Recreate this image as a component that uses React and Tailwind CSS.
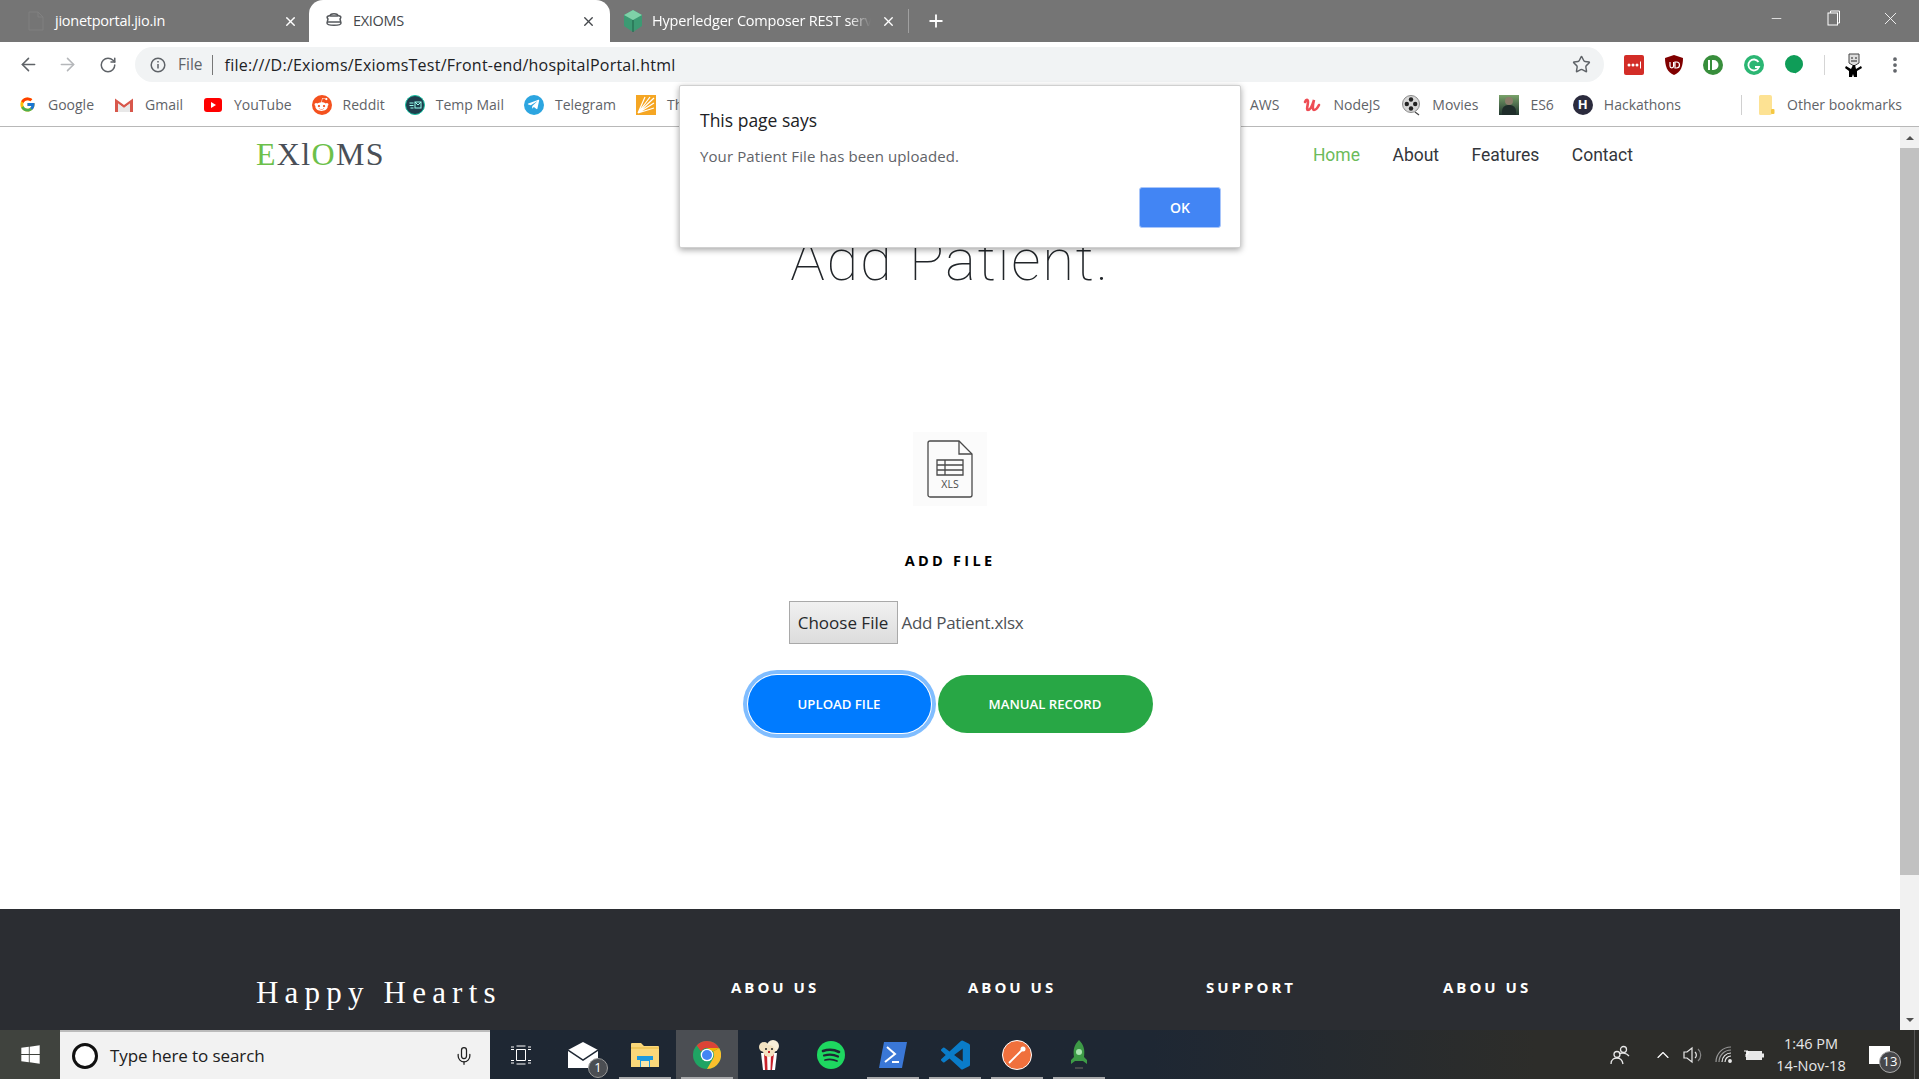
import React from "react";
import { ArrowLeft, ArrowRight, RotateCw, Star, EllipsisVertical, Plus, X, Minus, ChevronUp, Mic } from "lucide-react";
import { FcGoogle } from "react-icons/fc";
import { FaRedditAlien, FaTelegramPlane, FaWindows } from "react-icons/fa";

const ui = "font-['Open_Sans','Noto_Sans',sans-serif]";

function Gmail() {
  return (
    <svg width="18" height="15" viewBox="0 0 18 15">
      <path d="M0 1.500 9 8l9-6.500V15h-3V6.500L9 11 3 6.500V15H0z" fill="#d8574b" />
      <path d="M3 6.500 9 11l6-4.500V15H3z" fill="#e8e8e8" />
    </svg>
  );
}
function YouTube() {
  return (
    <svg width="18" height="14" viewBox="0 0 18 14">
      <rect width="18" height="14" rx="3" fill="#f00" />
      <path d="M7 4l5 3-5 3z" fill="#fff" />
    </svg>
  );
}
function Reddit() {
  return (
    <span className="flex h-[20px] w-[20px] items-center justify-center rounded-full bg-[#f4511e] text-white">
      <FaRedditAlien size={15} />
    </span>
  );
}
function TempMail() {
  return (
    <svg width="20" height="20" viewBox="0 0 20 20">
      <circle cx="10" cy="10" r="9.500" fill="#1f3f4d" stroke="#16c2a3" strokeWidth="1" />
      <path d="M4.500 8h4M4.500 10.500h4M5.500 13h3" stroke="#9fe" strokeWidth="1" />
      <rect x="10" y="7" width="6" height="6" fill="none" stroke="#9fe" strokeWidth="1" />
      <path d="M10 7l3 3 3-3" fill="none" stroke="#9fe" strokeWidth="1" />
    </svg>
  );
}
function Telegram() {
  return (
    <span className="flex h-[20px] w-[20px] items-center justify-center rounded-full bg-[#2ca5e0] text-white">
      <FaTelegramPlane size={13} />
    </span>
  );
}
function Think() {
  return (
    <svg width="20" height="20" viewBox="0 0 20 20">
      <rect width="20" height="20" fill="#f5a623" />
      <path d="M2 18 18 3M2 18 18 8M2 18 18 13M2 18 9 2M2 18 14 2" stroke="#fff" strokeWidth="1.200" />
    </svg>
  );
}
function NodeU() {
  return (
    <svg width="18" height="18" viewBox="0 0 18 18">
      <path d="M2 6C3 3 5 3 5 6c0 3-2 8 0 8 3 0 5-7 6-10-1 4-2 10 0 10 2 0 4-3 5-5" fill="none" stroke="#ee4d55" strokeWidth="2.600" strokeLinecap="round" />
    </svg>
  );
}
function Movies() {
  return (
    <svg width="18" height="22" viewBox="0 0 18 22">
      <circle cx="9" cy="10" r="8.500" fill="#d7d7d7" stroke="#8a8a8a" />
      <circle cx="9" cy="5.500" r="2.200" fill="#222" />
      <circle cx="9" cy="14.500" r="2.200" fill="#222" />
      <circle cx="4.800" cy="10" r="2.200" fill="#222" />
      <circle cx="13.200" cy="10" r="2.200" fill="#222" />
      <path d="M13 18l4 3" stroke="#444" strokeWidth="1.200" />
    </svg>
  );
}
function Es6() {
  return (
    <span className="relative block h-[20px] w-[20px] overflow-hidden bg-linear-to-b from-[#7aa36a] to-[#22372f]">
      <span className="absolute left-[6px] top-[2px] h-[8px] w-[8px] rounded-full bg-[#8b7d6b]" />
      <span className="absolute left-[3px] top-[10px] h-[10px] w-[14px] rounded-t-md bg-[#1f2d2a]" />
    </span>
  );
}
function Hack() {
  return (
    <span className="flex h-[20px] w-[20px] items-center justify-center rounded-full bg-[#2b2b3d] text-[13px] font-bold leading-none text-white">H</span>
  );
}
function Folder() {
  return (
    <svg width="17" height="20" viewBox="0 0 17 20">
      <path d="M1 1.500A1.500 1.500 0 0 1 2.500 0H12a2 2 0 0 1 2 2v16a2 2 0 0 1-2 2H2.500A1.500 1.500 0 0 1 1 18.500z" fill="#fde293" />
      <rect x="13" y="14" width="3.500" height="5" rx="1" fill="#f5c842" />
    </svg>
  );
}

function Bookmark({ icon, label, className = "" }) {
  return (
    <div className={`flex items-center gap-[11px] ${className}`}>
      <span className="flex w-[20px] shrink-0 items-center justify-center">{icon}</span>
      <span className="whitespace-nowrap text-[14px] text-[#5f6368]">{label}</span>
    </div>
  );
}

function Chrome({ size = 28 }) {
  return (
    <svg width={size} height={size} viewBox="0 0 24 24">
      <circle cx="12" cy="12" r="12" fill="#1fa463" />
      <path d="M12 0a12 12 0 0 1 10.400 6H12a6 6 0 0 0-5.200 3L3.200 3.800A12 12 0 0 1 12 0z" fill="#db4437" />
      <path d="M22.400 6A12 12 0 0 1 12 24l5.200-9a6 6 0 0 0 0-6z" fill="#fbc02d" />
      <path d="M12 6h10.400l-5.200 3z" fill="#f4b400" />
      <circle cx="12" cy="12" r="5.400" fill="#fff" />
      <circle cx="12" cy="12" r="4.300" fill="#4285f4" />
    </svg>
  );
}

function TaskSlot({ children, active, bar }) {
  return (
    <div className={`relative flex h-full w-[62px] items-center justify-center ${active ? "bg-[#4b4e53]" : ""}`}>
      {children}
      {bar && <span className="absolute bottom-0 left-[5px] right-[5px] h-[2px] bg-[#a8a9ab]" />}
    </div>
  );
}

const navItems = [
  ["Home", "text-[#6cbb5a]"],
  ["About", "text-[#33363b]"],
  ["Features", "text-[#33363b]"],
  ["Contact", "text-[#33363b]"],
];

function FooterCol({ label, className }) {
  return <div className={`text-[15px] font-bold tracking-[3px] text-white ${className}`}>{label}</div>;
}

export default function App() {
  return (
    <div className={`relative flex h-[1079px] w-[1919px] flex-col overflow-hidden bg-white ${ui}`}>
      {/* tab strip */}
      <div className="flex h-[42px] shrink-0 items-stretch bg-[#757575] text-[14.500px]">
        <div className="flex w-[309px] items-center pl-[28px] pr-[11px] text-white">
          <svg width="16" height="20" viewBox="0 0 16 20" fill="none" stroke="#808080" className="mr-[11px] shrink-0">
            <path d="M1 1h9l5 5v13H1zM10 1v5h5" />
          </svg>
          <span className="flex-1 whitespace-nowrap tracking-[-0.250px]">jionetportal.jio.in</span>
          <X size={15} strokeWidth={2.200} />
        </div>
        <div className="flex w-[301px] items-center rounded-t-[14px] bg-white pl-[15px] pr-[14px] text-[#44474b]">
          <svg width="20" height="20" viewBox="0 0 20 20" className="mr-[9px]" fill="none" stroke="#55585c" strokeWidth="1.500">
            <path d="M6 5c0-3 8-3 8 0M4 8c-2-2 0-4 3-3h6c3-1 5 1 3 3l1 4c0 3-14 3-14 0z" />
            <path d="M3 11h14" />
          </svg>
          <span className="flex-1 whitespace-nowrap tracking-[-0.300px]">EXIOMS</span>
          <X size={15} strokeWidth={2.200} />
        </div>
        <div className="flex w-[298px] items-center pl-[13px] pr-[12px] text-white">
          <svg width="20" height="22" viewBox="0 0 20 22" className="mr-[9px] shrink-0">
            <path d="M10 0 19 5v11l-9 6-9-6V5z" fill="#3c9a73" />
            <path d="M10 0 19 5l-9 5-9-5z" fill="#7fd1a8" />
            <path d="M10 10v12" stroke="#1f5f49" />
          </svg>
          <span className="flex-1 overflow-hidden whitespace-nowrap tracking-[-0.200px] [mask-image:linear-gradient(to_right,black_90%,transparent)]">Hyperledger Composer REST server</span>
          <X size={15} strokeWidth={2.200} className="ml-[10px] shrink-0" />
        </div>
        <div className="my-[9px] w-px bg-[#a0a0a0]" />
        <div className="flex w-[54px] items-center justify-center text-white">
          <Plus size={20} strokeWidth={2.200} />
        </div>
        <div className="ml-auto flex items-start text-white">
          <div className="flex h-[36px] w-[57px] items-center justify-center"><Minus size={15} strokeWidth={1.200} /></div>
          <div className="flex h-[36px] w-[58px] items-center justify-center">
            <svg width="14" height="16" viewBox="0 0 14 16" fill="none" stroke="#fff">
              <path d="M3.500 3V1h9v12h-2" />
              <rect x="1" y="3" width="9.500" height="12" />
            </svg>
          </div>
          <div className="flex h-[36px] w-[56px] items-center justify-center pl-[10px] pr-[12px]"><X size={21} strokeWidth={1} /></div>
        </div>
      </div>

      {/* toolbar */}
      <div className="flex h-[42px] shrink-0 items-center bg-white pb-[2px] pt-[5px]">
        <div className="flex w-[135px] items-center text-[#5f6368]">
          <span className="flex w-[56px] justify-center"><ArrowLeft size={21} strokeWidth={1.800} /></span>
          <span className="-ml-[9px] flex w-[40px] justify-center text-[#b5b7ba]"><ArrowRight size={21} strokeWidth={1.800} /></span>
          <span className="ml-[1px] flex w-[40px] justify-center"><RotateCw size={18} strokeWidth={2} /></span>
        </div>
        <div className="flex h-[35px] w-[1469px] items-center rounded-full bg-[#f1f3f4] pl-[15px] pr-[13px]">
          <svg width="16" height="16" viewBox="0 0 16 16" fill="none" stroke="#5f6368" strokeWidth="1.500">
            <circle cx="8" cy="8" r="6.800" />
            <path d="M8 7v4.500M8 4v1.500" />
          </svg>
          <span className="ml-[12px] text-[15.500px] text-[#5f6368]">File</span>
          <span className="ml-[9px] h-[20px] w-px bg-[#777]" />
          <span className="ml-[12px] flex-1 whitespace-nowrap text-[16px] tracking-[0.230px] text-[#202124]">file:///D:/Exioms/ExiomsTest/Front-end/hospitalPortal.html</span>
          <Star size={19} strokeWidth={1.800} className="text-[#5f6368]" />
        </div>
        <div className="ml-[20px] flex items-center gap-[20.500px]">
          <svg width="20" height="20" viewBox="0 0 20 20">
            <rect width="20" height="20" rx="2" fill="#d32d27" />
            <circle cx="5" cy="10" r="1.500" fill="#fff" />
            <circle cx="9" cy="10" r="1.500" fill="#fff" />
            <circle cx="13" cy="10" r="1.500" fill="#fff" />
            <path d="M16.500 6.500v7" stroke="#fff" />
          </svg>
          <svg width="18" height="20" viewBox="0 0 18 20" className="-mr-[1px]">
            <path d="M9 0 18 3c0 8-2 14-9 17C2 17 0 11 0 3z" fill="#800000" />
            <path d="M5 7v4a1.800 1.800 0 0 0 3.600 0V7M10 7h1.500a2.500 2.500 0 0 1 0 6H10z" fill="none" stroke="#fff" strokeWidth="1.200" />
          </svg>
          <svg width="20" height="20" viewBox="0 0 20 20" className="ml-[1px]">
            <circle cx="10" cy="10" r="10" fill="#388e3c" />
            <path d="M6 5v10" stroke="#fff" strokeWidth="2" />
            <path d="M9 5h1.500a5 5 0 0 1 0 10H9z" fill="#fff" />
          </svg>
          <svg width="20" height="20" viewBox="0 0 20 20">
            <circle cx="10" cy="10" r="10" fill="#2bb673" />
            <path d="M14.500 7A5.500 5.500 0 1 0 15 12h-4" fill="none" stroke="#fff" strokeWidth="1.800" />
          </svg>
          <svg width="20" height="20" viewBox="0 0 20 20">
            <path d="M10 0a9 9 0 0 1 9 9c0 4.500-4 8-8 9.500V18h-1a9 9 0 0 1 0-18z" fill="#0f9d58" />
          </svg>
        </div>
        <span className="ml-[20px] h-[20px] w-px bg-[#d5d5d5]" />
        <svg width="20" height="24" viewBox="0 0 20 24" className="ml-[19px]">
          <path d="M5 1h10v9l-5 3-5-3z" fill="#ddd" stroke="#444" />
          <path d="M7 5h2M11 5h2M7 8h6" stroke="#222" />
          <path d="M9 12h2l1 4 5-3 1 2-5 3v6h-3l-1-3-1 3H5v-6L1 15l1-2 5 3z" fill="#000" />
        </svg>
        <EllipsisVertical size={20} strokeWidth={2.500} className="ml-[21px] text-[#5f6368]" />
      </div>

      {/* bookmarks */}
      <div className="flex h-[43px] shrink-0 items-center justify-between border-b border-[#b8b8b8] pb-[1px] pl-[17px] pr-[17px]">
        <div className="flex items-center gap-[20px]">
          <Bookmark icon={<FcGoogle size={17} />} label="Google" />
          <Bookmark icon={<Gmail />} label="Gmail" />
          <Bookmark icon={<YouTube />} label="YouTube" />
          <Bookmark icon={<Reddit />} label="Reddit" />
          <Bookmark icon={<TempMail />} label="Temp Mail" />
          <Bookmark icon={<Telegram />} label="Telegram" />
          <Bookmark icon={<Think />} label="Think" />
        </div>
        <div className="flex items-center">
          <Bookmark icon={<span />} label="AWS" className="[&>span:first-child]:hidden" />
          <Bookmark icon={<NodeU />} label="NodeJS" className="ml-[23px]" />
          <Bookmark icon={<Movies />} label="Movies" className="ml-[21px]" />
          <Bookmark icon={<Es6 />} label="ES6" className="ml-[21px]" />
          <Bookmark icon={<Hack />} label="Hackathons" className="ml-[19px]" />
          <span className="ml-[60px] h-[20px] w-px bg-[#d0d0d0]" />
          <Bookmark icon={<Folder />} label="Other bookmarks" className="ml-[14px]" />
        </div>
      </div>

      {/* page + scrollbar */}
      <div className="flex min-h-0 flex-1">
        <div className="flex min-w-0 flex-1 flex-col overflow-hidden">
          <header className="flex h-[55px] shrink-0 items-center justify-between pl-[256px] pr-[267px]">
            <div className="pb-[2px] font-['Liberation_Serif',serif] text-[32px] leading-none tracking-[1.300px] text-[#4a4f57]">
              <span className="text-[#6cc04a]">E</span>X<span className="font-light">l</span><span className="text-[#6cc04a]">O</span>MS
            </div>
            <nav className="flex gap-[32.500px] pt-[3px] font-['Roboto',sans-serif] text-[17.500px] leading-none">
              {navItems.map(([t, c]) => (
                <span key={t} className={c}>{t}</span>
              ))}
            </nav>
          </header>

          <main className="flex flex-1 flex-col items-center">
            <h1 className="mt-[43px] font-['Roboto',sans-serif] text-[58px] font-thin leading-[70px] tracking-[1.700px] text-[#212529]">Add Patient.</h1>
            <div className="mt-[137px] flex h-[74px] w-[74px] items-center justify-center bg-[#fbfbfb]">
              <svg width="46" height="58" viewBox="0 0 46 58" fill="none" stroke="#4a4a4a" strokeWidth="1.300">
                <path d="M3 1h29l13 13v41a2 2 0 0 1-2 2H3a2 2 0 0 1-2-2V3a2 2 0 0 1 2-2z" />
                <path d="M32 1v13h13" />
                <path d="M10 20h26v15H10zM10 25h26M10 30h26M18 20v15" />
                <text x="23" y="48" textAnchor="middle" fontSize="10.500" stroke="none" fill="#4a4a4a" fontFamily="Open Sans, sans-serif">XLS</text>
              </svg>
            </div>
            <div className="mt-[44px] text-[14.500px] font-bold leading-[22px] tracking-[3.300px] text-black">ADD FILE</div>
            <div className="mt-[29px] flex items-center text-[17px] text-[#4d5156]">
              <button className="flex h-[43px] w-[109px] items-center justify-center border border-[#a9a9a9] bg-linear-to-b from-[#f1f1f1] to-[#dcdcdc] text-[17px] text-[#26282b]">Choose File</button>
              <span className="ml-[4px] w-[210px] whitespace-nowrap tracking-[-0.300px]">Add Patient.xlsx</span>
            </div>
            <div className="mt-[31px] flex items-center gap-[7px]">
              <button className="h-[58px] w-[183px] rounded-full bg-[#007bff] pt-[1px] text-[13.200px] font-semibold text-white shadow-[0_0_0_1px_#fff,0_0_0_5px_#80bdff]">UPLOAD FILE</button>
              <button className="h-[58px] w-[215px] rounded-full bg-[#28a745] pt-[1px] text-[13.200px] font-semibold text-white">MANUAL RECORD</button>
            </div>
          </main>

          <footer className="flex h-[121px] shrink-0 items-start bg-[#2b2d32] pl-[256px] pt-[67px]">
            <div className="w-[475px] pt-[1px] font-['Liberation_Serif',serif] text-[31px] leading-[32px] tracking-[6.200px] text-white">Happy Hearts</div>
            <FooterCol label="ABOU US" className="w-[237px]" />
            <FooterCol label="ABOU US" className="w-[238px]" />
            <FooterCol label="SUPPORT" className="w-[237px]" />
            <FooterCol label="ABOU US" />
          </footer>
        </div>

        <div className="flex w-[19px] shrink-0 flex-col bg-[#f1f1f1]">
          <div className="flex h-[21px] items-center justify-center">
            <span className="h-0 w-0 border-x-[4px] border-b-[4px] border-x-transparent border-b-[#505050]" />
          </div>
          <div className="h-[727px] bg-[#c1c1c1]" />
          <div className="flex-1" />
          <div className="flex h-[21px] items-center justify-center">
            <span className="h-0 w-0 border-x-[4px] border-t-[4px] border-x-transparent border-t-[#505050]" />
          </div>
        </div>
      </div>

      {/* taskbar */}
      <div className="flex h-[49px] shrink-0 items-center bg-linear-to-r from-[#1e2733] from-60% to-[#2d2d2a] to-80% text-white">
        <div className="flex h-full w-[60px] items-center justify-center bg-[#40433e]">
          <FaWindows size={21} />
        </div>
        <div className="flex h-full w-[430px] items-center border-t-2 border-[#bbb] bg-[#f2f2f2] pl-[12px] pr-[16px] text-[#202020]">
          <span className="h-[26px] w-[26px] rounded-full border-[3px] border-[#111] bg-white" />
          <span className="ml-[12px] flex-1 text-[17px] tracking-[-0.100px]">Type here to search</span>
          <Mic size={20} strokeWidth={1.500} />
        </div>
        <TaskSlot>
          <svg width="22" height="20" viewBox="0 0 22 20" fill="none" stroke="#fff" strokeWidth="1">
            <path d="M6.500 4.500h9v11h-9zM1 2h3M1 4.500h3M1 15.500h3M1 18h3M18 2h3M18 4.500h3M18 15.500h3M18 18h3M6.500 1h9M6.500 19h9" />
          </svg>
        </TaskSlot>
        <TaskSlot>
          <span className="relative">
            <svg width="30" height="26" viewBox="0 0 30 26">
              <path d="M0 8 15 0l15 8v18H0z" fill="#fff" />
              <path d="M0 8l15 10L30 8" fill="none" stroke="#1e2733" strokeWidth="1.500" />
            </svg>
            <span className="absolute -bottom-[10px] -right-[10px] flex h-[20px] w-[20px] items-center justify-center rounded-full border border-[#999] bg-[#4b4e53] text-[13px] leading-none text-white">1</span>
          </span>
        </TaskSlot>
        <TaskSlot bar>
          <svg width="28" height="26" viewBox="0 0 28 26">
            <path d="M0 2a1 1 0 0 1 1-1h9l3 3h14a1 1 0 0 1 1 1v20H0z" fill="#fbd87a" />
            <path d="M0 6h28" stroke="#e8b93f" />
            <path d="M6 14h16v4h-3v7H9v-7H6z" fill="#1e9ae0" />
            <path d="M10 19h8v6h-8z" fill="#fbe6a6" />
          </svg>
        </TaskSlot>
        <TaskSlot active bar>
          <Chrome size={28} />
        </TaskSlot>
        <TaskSlot>
          <svg width="22" height="30" viewBox="0 0 22 30">
            <path d="M3 13h16l-2 17H5z" fill="#fff" />
            <path d="M6 13h3l.5 17H7zM13 13h3l-2 17h-1.500z" fill="#c8222a" />
            <circle cx="6" cy="7" r="5" fill="#f4e3c1" />
            <circle cx="15" cy="6" r="6" fill="#f9efd9" />
            <circle cx="11" cy="11" r="6" fill="#f4e3c1" />
            <circle cx="8" cy="9" r="1" fill="#222" />
            <circle cx="14" cy="9" r="1" fill="#222" />
            <path d="M10 11h2v2h-2z" fill="#c8222a" />
          </svg>
        </TaskSlot>
        <TaskSlot>
          <svg width="28" height="28" viewBox="0 0 28 28" fill="none" stroke="#1e2733" strokeLinecap="round">
            <circle cx="14" cy="14" r="14" fill="#1ed760" stroke="none" />
            <path d="M6 10c6-2 11-1.500 16 1" strokeWidth="2.600" />
            <path d="M7 14.500c5-1.500 10-1 14 1" strokeWidth="2.200" />
            <path d="M8 19c4-1 8-.8 12 1" strokeWidth="1.800" />
          </svg>
        </TaskSlot>
        <TaskSlot bar>
          <svg width="28" height="26" viewBox="0 0 28 26">
            <path d="M5 0h23l-5 26H0z" fill="#3a77d6" />
            <path d="M8 5l8 7-10 8" fill="none" stroke="#fff" strokeWidth="2" />
            <path d="M13 20h7" stroke="#fff" strokeWidth="2" />
          </svg>
        </TaskSlot>
        <TaskSlot bar>
          <svg width="29" height="30" viewBox="0 0 24 24">
            <path fill="#0a7cc9" d="M23.150 2.587L18.210.21a1.494 1.494 0 0 0-1.705.29l-9.460 8.630-4.120-3.128a.999.999 0 0 0-1.276.057L.327 7.261A1 1 0 0 0 .326 8.740L3.899 12 .326 15.260a1 1 0 0 0 .001 1.479L1.650 17.940a.999.999 0 0 0 1.276.057l4.120-3.128 9.460 8.630a1.492 1.492 0 0 0 1.704.29l4.942-2.377A1.500 1.500 0 0 0 24 20.060V3.939a1.500 1.500 0 0 0-.850-1.352zm-5.146 14.861L10.826 12l7.178-5.448v10.896z" />
          </svg>
        </TaskSlot>
        <TaskSlot bar>
          <svg width="30" height="30" viewBox="0 0 30 30">
            <circle cx="15" cy="15" r="14.500" fill="#f0703d" stroke="#fff" />
            <path d="M7 23 20 10" stroke="#fff" strokeWidth="1.800" />
            <circle cx="21" cy="9" r="2.500" fill="#fff" />
          </svg>
        </TaskSlot>
        <TaskSlot bar>
          <svg width="24" height="30" viewBox="0 0 24 30">
            <path d="M12 0c5 5 6 10 5 17l3 3v4l-4-3H8l-4 3v-4l3-3C6 10 7 5 12 0z" fill="#3d9a46" />
            <circle cx="12" cy="12" r="3" fill="#a9e5b0" />
            <path d="M8 28h8" stroke="#555" strokeWidth="1.500" />
          </svg>
        </TaskSlot>

        <div className="ml-auto flex h-full items-center">
          <svg width="20" height="20" viewBox="0 0 20 20" fill="none" stroke="#e8e8e8" strokeWidth="1.300">
            <circle cx="13.500" cy="4.500" r="3" />
            <path d="M9 9c2-1.500 7-1.500 10 2" />
            <circle cx="7" cy="9.500" r="3" />
            <path d="M1 19c0-5 4-6 6-6s5 1 6 6" />
          </svg>
          <ChevronUp size={20} strokeWidth={1.400} className="ml-[23px]" />
          <svg width="20" height="18" viewBox="0 0 20 18" fill="none" stroke="#e8e8e8" strokeWidth="1.200" className="ml-[10px]">
            <path d="M1 6h3l5-4v14l-5-4H1z" />
            <path d="M12 6a4 4 0 0 1 0 6" />
            <path d="M15 3a8 8 0 0 1 0 12" stroke="#888" />
          </svg>
          <svg width="18" height="18" viewBox="0 0 18 18" fill="none" stroke="#e8e8e8" strokeWidth="1.200" className="ml-[12px]">
            <path d="M1 16A15 15 0 0 1 16 1M4 16A12 12 0 0 1 16 4" stroke="#999" />
            <path d="M7 16A9 9 0 0 1 16 7M10 16a6 6 0 0 1 6-6" />
            <circle cx="15" cy="15" r="1.300" fill="#e8e8e8" />
          </svg>
          <svg width="20" height="14" viewBox="0 0 20 14" className="ml-[11px]">
            <rect x="2" y="3" width="16" height="9" fill="#e8e8e8" />
            <rect x="18" y="5.500" width="2" height="4" fill="#e8e8e8" />
            <path d="M0 3h4v3H2v3" fill="none" stroke="#fff" />
          </svg>
          <div className="ml-[10px] flex w-[74px] flex-col items-center text-[14.500px] leading-[22px] text-[#e8e8e8]">
            <span>1:46 PM</span>
            <span>14-Nov-18</span>
          </div>
          <span className="relative ml-[21px] block h-[18px] w-[21px] bg-white">
            <span className="absolute -bottom-[9px] -right-[11px] flex h-[22px] w-[22px] items-center justify-center rounded-full border border-[#aaa] bg-[#46474a] text-[13px] leading-none text-white">13</span>
          </span>
          <span className="ml-[24px] h-full w-px bg-[#555]" />
          <span className="w-[4px]" />
        </div>
      </div>

      {/* alert */}
      <div className="absolute left-[679px] top-[85px] z-10 flex h-[163px] w-[562px] flex-col rounded-[2px] border border-[#d0d0d0] bg-white pl-[20px] pr-[19px] pt-[22px] shadow-[0_2px_6px_rgba(0,0,0,0.35)]">
        <div className="text-[17.500px] leading-[24px] text-[#202124]">This page says</div>
        <div className="mt-[14px] text-[15px] leading-[20px] tracking-[0.100px] text-[#5f6368]">Your Patient File has been uploaded.</div>
        <button className="mt-[21px] flex h-[41px] w-[82px] items-center justify-center self-end rounded-[3px] border border-[#a9c6fa] bg-[#4285f4] text-[14px] font-semibold text-white">OK</button>
      </div>
    </div>
  );
}
